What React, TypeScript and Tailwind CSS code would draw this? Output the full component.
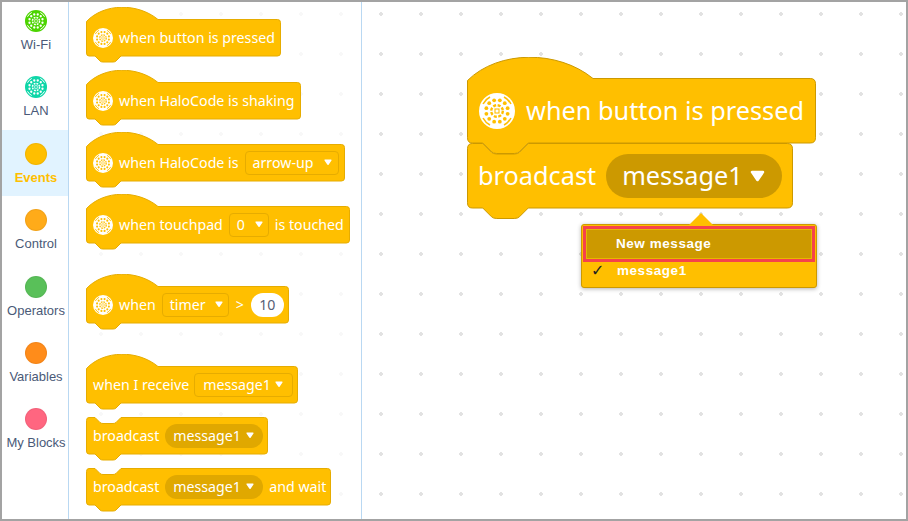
import type { ReactNode } from 'react'

const BLOCK_FONT = "font-['Noto_Sans',sans-serif]"

function blockPath(hat: number, body: number, w: number, s: number, notchTop: boolean) {
  const r = 3 * s
  const n = 6 * s
  const top = hat + 0.5
  const bottom = hat + body
  const c = hat > 0 ? (0.5 - 0.25 * (top + 2)) / 0.75 : 0
  let d = ''
  if (hat > 0) {
    d += `M0.5 ${top + 2} C${18 * s} ${c} ${52 * s} ${c} ${72 * s} ${top} `
  } else if (notchTop) {
    d += `M0.5 ${top + r} Q0.5 ${top} ${r} ${top} L${9 * s} ${top} L${14 * s} ${top + n - s} Q${15 * s} ${top + n} ${17 * s} ${top + n} L${27 * s} ${top + n} Q${29 * s} ${top + n} ${30 * s} ${top + n - s} L${35 * s} ${top} `
  }
  d += `L${w - r - 0.5} ${top} Q${w - 0.5} ${top} ${w - 0.5} ${top + r} `
  d += `L${w - 0.5} ${bottom - r} Q${w - 0.5} ${bottom} ${w - r - 0.5} ${bottom} `
  d += `L${35 * s} ${bottom} L${30 * s} ${bottom + n - s} Q${29 * s} ${bottom + n} ${27 * s} ${bottom + n} L${17 * s} ${bottom + n} Q${15 * s} ${bottom + n} ${14 * s} ${bottom + n - s} L${9 * s} ${bottom} `
  d += `L${r} ${bottom} Q0.5 ${bottom} 0.5 ${bottom - r} Z`
  return d
}

function Halo({ size, bg = '#fff', fg = '#ffbf00' }: { size: number; bg?: string; fg?: string }) {
  const ring = Array.from({ length: 12 }, (_, i) => (i * Math.PI) / 6 + Math.PI / 12)
  const corners = [45, 135, 225, 315]
  return (
    <svg width={size} height={size} viewBox="0 0 36 36" className="shrink-0">
      <circle cx="18" cy="18" r="18" fill={bg} />
      {ring.map((a, i) => (
        <circle key={i} cx={18 + 11 * Math.cos(a)} cy={18 + 11 * Math.sin(a)} r="1.9" fill={fg} />
      ))}
      <circle cx="18" cy="18" r="5.8" fill="none" stroke={fg} strokeWidth="2.4" strokeDasharray="3 1.55" />
      <rect x="16" y="16" width="4" height="4" fill="none" stroke={fg} strokeWidth="1.1" />
      {corners.map((deg) => {
        const a = (deg * Math.PI) / 180
        const x1 = 18 + 15.6 * Math.cos(a - 0.32)
        const y1 = 18 + 15.6 * Math.sin(a - 0.32)
        const x2 = 18 + 15.6 * Math.cos(a + 0.32)
        const y2 = 18 + 15.6 * Math.sin(a + 0.32)
        return (
          <path
            key={deg}
            d={`M${x1} ${y1} A15.6 15.6 0 0 1 ${x2} ${y2}`}
            fill="none"
            stroke={fg}
            strokeWidth="1.6"
          />
        )
      })}
    </svg>
  )
}

function Tri({ size = 8 }: { size?: number }) {
  return (
    <svg width={size} height={size * 0.8} viewBox="0 0 10 8" className="shrink-0">
      <path d="M1.4 1.4 H8.6 L5 6.6 Z" fill="#fff" stroke="#fff" strokeWidth="1.8" strokeLinejoin="round" />
    </svg>
  )
}

type BlockProps = {
  w: number
  hat?: number
  body?: number
  s?: number
  stroke?: string
  notchTop?: boolean
  className: string
  children: ReactNode
}

function Block({ w, hat = 0, body = 37, s = 1, stroke = '#e6ac00', notchTop = false, className, children }: BlockProps) {
  const total = hat + body + 6 * s + 1
  return (
    <div className={`relative ${className}`}>
      <svg width={w} height={total} className="absolute left-0 top-0">
        <path d={blockPath(hat, body, w, s, notchTop)} fill="#ffbf00" stroke={stroke} strokeWidth="1" />
      </svg>
      <div className={`relative flex items-center text-white ${BLOCK_FONT}`}>{children}</div>
    </div>
  )
}

function Field({ className, children }: { className: string; children: ReactNode }) {
  return (
    <span className={`flex h-6 items-center justify-between rounded-[4px] border border-[#e6ac00] ${className}`}>
      {children}
      <Tri />
    </span>
  )
}

function Pill({ className, children }: { className: string; children: ReactNode }) {
  return (
    <span className={`flex h-6 items-center justify-between rounded-full bg-[#e0a800] ${className}`}>
      {children}
      <Tri />
    </span>
  )
}

const categories = [
  { name: 'Wi-Fi', color: '#4cd400', halo: true },
  { name: 'LAN', color: '#0fd6a8', halo: true },
  { name: 'Events', color: '#ffbf00', active: true },
  { name: 'Control', color: '#ffab19' },
  { name: 'Operators', color: '#59c059' },
  { name: 'Variables', color: '#ff8c1a' },
  { name: 'My Blocks', color: '#ff6680' },
]

function Sidebar() {
  return (
    <nav className="w-[67px] shrink-0 overflow-hidden border-r border-[#b9d8f2] font-['Liberation_Sans',sans-serif] text-[13px]">
      <div className="-mt-[5px]">
        {categories.map((c) => (
          <div
            key={c.name}
            className={`flex h-[66.4px] flex-col items-center pl-[2px] pt-[13px] ${c.active ? 'bg-[#e1f3ff] font-bold text-[#ffbf00]' : 'text-[#4a5a78]'}`}
          >
            {c.halo ? (
              <Halo size={22} bg={c.color} fg="#fff" />
            ) : (
              <span className="size-[22px] rounded-full border border-black/5" style={{ backgroundColor: c.color }} />
            )}
            <span className="mt-[4px] whitespace-nowrap leading-[17px]">{c.name}</span>
          </div>
        ))}
      </div>
    </nav>
  )
}

function Palette() {
  return (
    <aside className="w-[293px] shrink-0 border-r border-[#b9d8f2] bg-white bg-[radial-gradient(circle,#f8f8f8_1.6px,transparent_1.8px)] bg-[length:40px_40px] bg-[position:12px_-8px] pl-[17px] pt-[5px]">
      <div className="flex flex-col items-start text-[14.2px]">
        <Block w={195} hat={12} className="h-[55px] w-[195px] pt-[12px]">
          <span className="flex h-[37px] items-center gap-[6px] pl-[7px]">
            <Halo size={20} />
            when button is pressed
          </span>
        </Block>
        <Block w={215} hat={12} className="mt-[8px] h-[55px] w-[215px] pt-[12px]">
          <span className="flex h-[37px] items-center gap-[6px] pl-[7px]">
            <Halo size={20} />
            when HaloCode is shaking
          </span>
        </Block>
        <Block w={259} hat={12} className="mt-[7px] h-[55px] w-[259px] pt-[12px]">
          <span className="flex h-[37px] items-center gap-[6px] pl-[7px]">
            <Halo size={20} />
            when HaloCode is
            <Field className="w-[94px] pl-[7px] pr-[6px]">arrow-up</Field>
          </span>
        </Block>
        <Block w={264} hat={12} className="mt-[7px] h-[55px] w-[264px] pt-[12px]">
          <span className="flex h-[37px] items-center gap-[6px] pl-[7px]">
            <Halo size={20} />
            when touchpad
            <Field className="w-[40px] pl-[7px] pr-[5px]">0</Field>
            is touched
          </span>
        </Block>
        <Block w={203} hat={12} className="mt-[25px] h-[55px] w-[203px] pt-[12px]">
          <span className="flex h-[37px] items-center gap-[6px] pl-[7px]">
            <Halo size={20} />
            when
            <Field className="w-[67px] pl-[7px] pr-[5px]">timer</Field>
            <span className="px-[1px]">&gt;</span>
            <span className="flex h-6 w-[33px] items-center justify-center rounded-full bg-white text-[#575e75]">10</span>
          </span>
        </Block>
        <Block w={212} hat={12} className="mt-[25px] h-[55px] w-[212px] pt-[12px]">
          <span className="flex h-[37px] items-center gap-[5px] pl-[7px]">
            when I receive
            <Field className="w-[99px] pl-[8px] pr-[9px]">message1</Field>
          </span>
        </Block>
        <Block w={182} notchTop className="mt-[8px] h-[43px] w-[182px]">
          <span className="flex h-[37px] items-center gap-[6px] pl-[7px]">
            broadcast
            <Pill className="w-[98px] pl-[8px] pr-[9px]">message1</Pill>
          </span>
        </Block>
        <Block w={245} notchTop className="mt-[8px] h-[43px] w-[245px]">
          <span className="flex h-[37px] items-center gap-[6px] pl-[7px]">
            broadcast
            <Pill className="w-[98px] pl-[8px] pr-[9px]">message1</Pill>
            and wait
          </span>
        </Block>
      </div>
    </aside>
  )
}

function Canvas() {
  return (
    <main className="relative flex-1 overflow-hidden bg-white bg-[radial-gradient(circle,#e2e2e2_1.6px,transparent_1.8px)] bg-[length:40px_40px] bg-[position:-1px_-8px]">
      <div className="absolute left-[105px] top-[55px] text-[25.3px]">
        <Block w={349} hat={21} body={65} s={1.75} stroke="#cc9900" className="h-[97px] w-[349px] pt-[21px]">
          <span className="flex h-[65px] items-center gap-[11px] pb-[1px] pl-[12px] pt-[2px]">
            <Halo size={36} />
            when button is pressed
          </span>
        </Block>
        <Block w={326} body={65} s={1.75} stroke="#cc9900" notchTop className="-mt-[11px] h-[76px] w-[326px]">
          <span className="flex h-[65px] items-center gap-[10px] pl-[11px]">
            broadcast
            <span className="flex h-[44px] w-[176px] items-center justify-between rounded-full bg-[#cc9900] pl-[16px] pr-[17px]">
              message1
              <Tri size={15} />
            </span>
          </span>
        </Block>
      </div>
      <div className="absolute left-[219px] top-[222px] w-[236px] rounded-[3px] border border-[#cc9900] bg-[#ffbf00] pb-[6px] pt-[1px] font-['Liberation_Sans',sans-serif] text-[13.5px] font-bold tracking-[0.55px] text-white shadow-[0_1px_4px_rgba(0,0,0,0.3)]">
        <span className="absolute -top-[12px] left-[107px] size-0 border-x-[12px] border-b-[12px] border-x-transparent border-b-[#ffbf00]" />
        <div className="mx-[1px] h-[36px] border-[3px] border-[#f5434b]">
          <div className="flex h-full items-center border border-[#e6b800] bg-[#cc9900] pl-[29px]">New message</div>
        </div>
        <div className="relative flex h-[19px] items-center pl-[35px]">
          <span className="absolute left-[9px] -top-[1px] font-['DejaVu_Sans',sans-serif] text-[16px] font-normal leading-[19px] tracking-normal text-[#222]">✓</span>
          message1
        </div>
      </div>
    </main>
  )
}

export default function App() {
  return (
    <div className="flex h-[521px] w-[908px] overflow-hidden border-2 border-[#a3a3a3] bg-white">
      <Sidebar />
      <Palette />
      <Canvas />
    </div>
  )
}
